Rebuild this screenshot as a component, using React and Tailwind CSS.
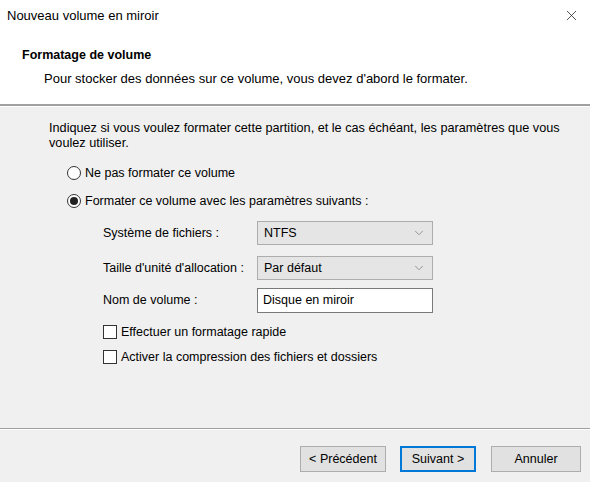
import { X, ChevronDown } from 'lucide-react'

function Radio({ checked, label }) {
  return (
    <div className="flex items-center h-[20px]">
      <span className="w-[14px] h-[14px] rounded-full border border-[#333] bg-white flex items-center justify-center">
        {checked && <span className="w-[8px] h-[8px] rounded-full bg-[#222]" />}
      </span>
      <span className="ml-[4px]">{label}</span>
    </div>
  )
}

function Check({ label }) {
  return (
    <div className="flex items-center h-[20px]">
      <span className="w-[14px] h-[14px] border border-[#333] bg-white" />
      <span className="ml-[4px]">{label}</span>
    </div>
  )
}

function Select({ value }) {
  return (
    <div className="w-[176px] h-[24px] bg-[#e5e5e5] border border-[#adadad] flex items-center pl-[6px] pr-[6px]">
      <span className="flex-1">{value}</span>
      <ChevronDown size={14} strokeWidth={1.25} className="text-[#777]" />
    </div>
  )
}

function Btn({ children, primary }) {
  return (
    <button
      className={`w-full h-[26px] bg-[#e1e1e1] flex items-center justify-center ${
        primary ? 'border-2 border-[#0078d7]' : 'border border-[#adadad]'
      }`}
    >
      {children}
    </button>
  )
}

export default function App() {
  return (
    <div
      className="w-[590px] h-[482px] bg-[#f0f0f0] flex flex-col text-[12.5px] text-black overflow-hidden"
      style={{ fontFamily: '"Liberation Sans", Arial, sans-serif' }}
    >
      {/* Header */}
      <div className="bg-white h-[104px] flex flex-col">
        <div className="h-[31px] flex items-center pl-[7px] pr-[10px]">
          <span className="flex-1 text-[13px]">Nouveau volume en miroir</span>
          <X size={17} strokeWidth={1.1} className="text-[#222]" />
        </div>
        <div className="pl-[22px] pt-[15px] font-bold">Formatage de volume</div>
        <div className="pl-[44px] pt-[4px] text-[13px]">
          Pour stocker des données sur ce volume, vous devez d&apos;abord le formater.
        </div>
      </div>
      <div className="h-[2px] bg-[#a0a0a0]" />
      <div className="h-[1px] bg-white" />

      {/* Body */}
      <div className="flex-1 flex flex-col pl-[49px] pt-[14px]">
        <p className="leading-[15px] pr-[20px] text-[12.7px]">
          Indiquez si vous voulez formater cette partition, et le cas échéant, les paramètres que vous
          voulez utiliser.
        </p>
        <div className="pl-[18px] mt-[12px] flex flex-col gap-[8px]">
          <Radio label="Ne pas formater ce volume" />
          <Radio checked label="Formater ce volume avec les paramètres suivants :" />
        </div>
        <div className="pl-[54px] mt-[10px] flex flex-col">
          <div className="flex items-center h-[24px]">
            <span className="w-[154px]">Système de fichiers :</span>
            <Select value="NTFS" />
          </div>
          <div className="flex items-center h-[24px] mt-[11px]">
            <span className="w-[154px]">Taille d&apos;unité d&apos;allocation :</span>
            <Select value="Par défaut" />
          </div>
          <div className="flex items-center h-[25px] mt-[8px]">
            <span className="w-[154px]">Nom de volume :</span>
            <div className="w-[176px] h-[25px] bg-white border border-[#7a7a7a] flex items-center pl-[5px]">
              Disque en miroir
            </div>
          </div>
          <div className="flex flex-col mt-[9px] gap-[5px]">
            <Check label="Effectuer un formatage rapide" />
            <Check label="Activer la compression des fichiers et dossiers" />
          </div>
        </div>
      </div>

      <div className="h-[1px] bg-[#a0a0a0]" />
      <div className="h-[1px] bg-white" />

      {/* Footer */}
      <div className="h-[52px] flex items-start pt-[16px] pl-[300px]">
        <div className="w-[86px]"><Btn>&lt; Précédent</Btn></div>
        <div className="w-[76px] ml-[14px]"><Btn primary>Suivant &gt;</Btn></div>
        <div className="w-[90px] ml-[15px]"><Btn>Annuler</Btn></div>
      </div>
    </div>
  )
}
